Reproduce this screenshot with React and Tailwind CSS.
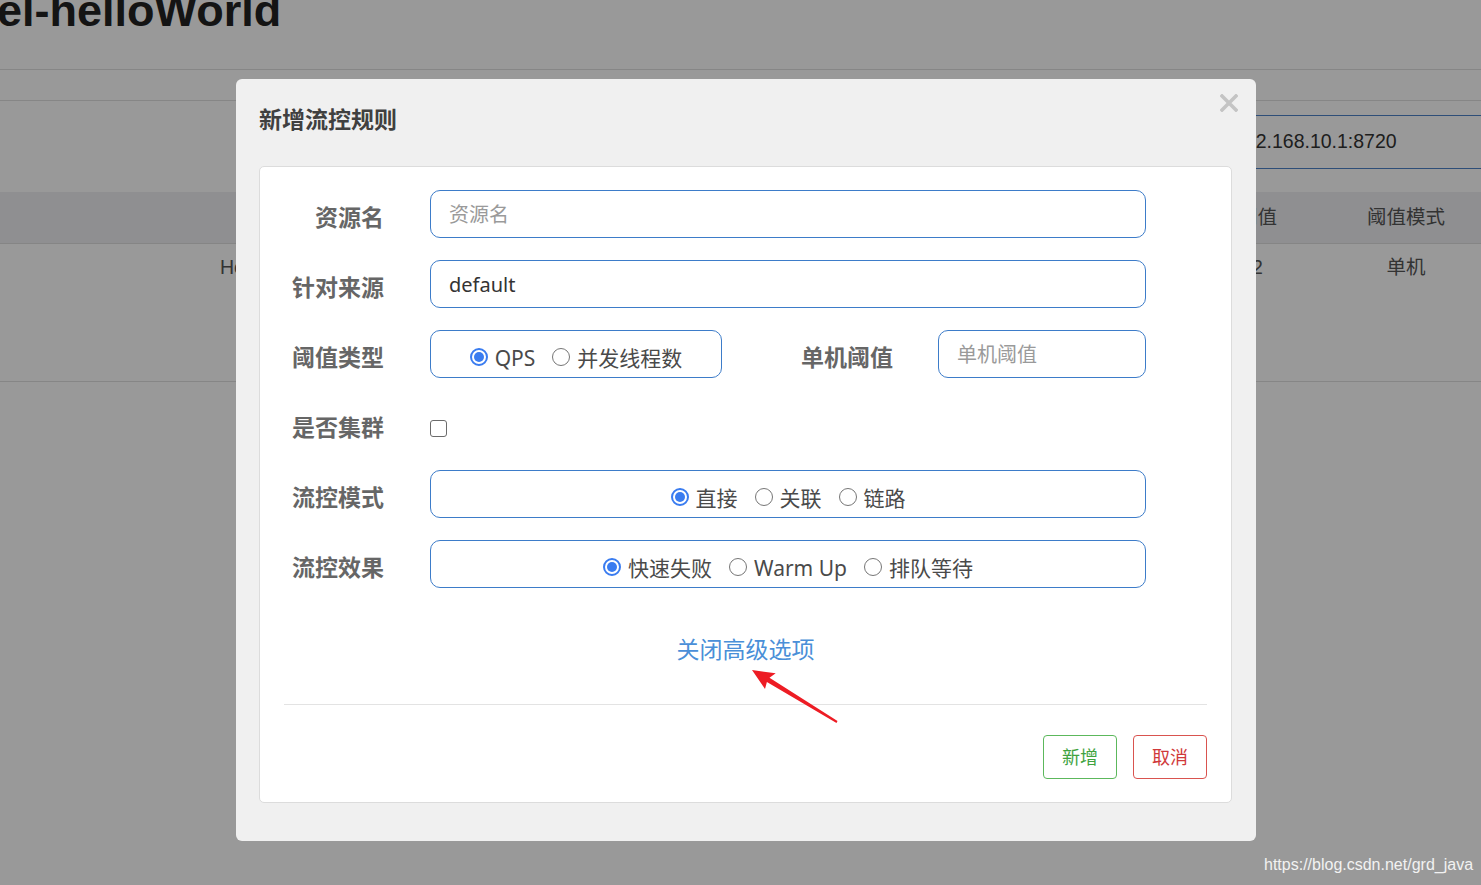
import React from "react";

const cn = "font-['Noto_Sans','Noto_Sans_CJK_SC',sans-serif]";

const Radio = ({ checked, label }) => (
  <label className="flex items-center gap-[7px]">
    {checked ? (
      <span className="w-[18px] h-[18px] rounded-full border-2 border-[#3a7cf0] bg-white flex items-center justify-center">
        <span className="w-[10px] h-[10px] rounded-full bg-[#3a7cf0]" />
      </span>
    ) : (
      <span className="w-[18px] h-[18px] rounded-full border-[1.5px] border-[#767676] bg-white" />
    )}
    <span className="text-[21px] leading-[28px] pt-[3px] text-[#4a4a4a]">{label}</span>
  </label>
);

const Label = ({ children, className = "w-[100px]" }) => (
  <div
    className={`${className} shrink-0 text-right pt-[6px] text-[23px] leading-[30px] font-bold text-[#666]`}
  >
    {children}
  </div>
);

const TextBox = ({ placeholder, value, className = "flex-1" }) => (
  <input
    readOnly
    placeholder={placeholder}
    value={value}
    className={`${className} h-[48px] min-w-0 rounded-[10px] border border-[#3d7cc9] bg-white px-[18px] text-[20px] text-[#333] outline-none placeholder:text-[#9a9a9a]`}
  />
);

const RadioBox = ({ items, className = "flex-1" }) => (
  <div
    className={`${className} h-[48px] rounded-[10px] border border-[#3d7cc9] bg-white flex items-center justify-center gap-[17px] pt-[5px]`}
  >
    {items.map((it) => (
      <Radio key={it.label} checked={it.checked} label={it.label} />
    ))}
  </div>
);

const Modal = () => (
  <div
    className={`absolute left-[236px] top-[79px] w-[1020px] rounded-[6px] bg-[#f0f0f0] pb-[38px] ${cn}`}
  >
    {/* header */}
    <div className="h-[87px] pl-[23px] pt-[26px]">
      <h3 className="text-[23px] leading-[28px] font-bold text-[#404040]">
        新增流控规则
      </h3>
    </div>
    <svg
      className="absolute right-[18px] top-[15px] w-[18px] h-[18px]"
      viewBox="0 0 18 18"
    >
      <path
        d="M2 2 L16 16 M16 2 L2 16"
        stroke="#c4c4c4"
        strokeWidth="3.6"
        strokeLinecap="square"
      />
    </svg>

    {/* body */}
    <div className="ml-[23px] w-[973px] rounded-[5px] border border-[#dcdcdc] bg-white px-[24px] pt-[23px] pb-[23px]">
      <div className="w-[862px] flex flex-col gap-[22px]">
        <div className="flex items-center gap-[46px]">
          <Label>资源名</Label>
          <TextBox placeholder="资源名" value="" />
        </div>
        <div className="flex items-center gap-[46px]">
          <Label>针对来源</Label>
          <TextBox value="default" />
        </div>
        <div className="flex items-center gap-[46px]">
          <Label>阈值类型</Label>
          <RadioBox
            className="w-[292px]"
            items={[
              { label: "QPS", checked: true },
              { label: "并发线程数", checked: false },
            ]}
          />
          <div className="flex flex-1 items-center gap-[45px]">
            <Label className="flex-1">单机阈值</Label>
            <TextBox className="w-[208px]" placeholder="单机阈值" value="" />
          </div>
        </div>
        <div className="flex items-center gap-[46px] h-[48px]">
          <Label>是否集群</Label>
          <div className="pt-[8px]">
            <span className="block w-[17px] h-[17px] rounded-[3px] border-[1.5px] border-[#6b6b6b] bg-white" />
          </div>
        </div>
        <div className="flex items-center gap-[46px]">
          <Label>流控模式</Label>
          <RadioBox
            items={[
              { label: "直接", checked: true },
              { label: "关联", checked: false },
              { label: "链路", checked: false },
            ]}
          />
        </div>
        <div className="flex items-center gap-[46px]">
          <Label>流控效果</Label>
          <RadioBox
            items={[
              { label: "快速失败", checked: true },
              { label: "Warm Up", checked: false },
              { label: "排队等待", checked: false },
            ]}
          />
        </div>
      </div>

      <div className="mt-[46px] text-center text-[23px] leading-[30px] text-[#4a8fd8]">
        关闭高级选项
      </div>

      <div className="mt-[40px] border-t border-[#e3e3e3] pt-[30px] flex justify-end gap-[16px]">
        <button className="w-[74px] h-[44px] rounded-[4px] border border-[#5cb85c] bg-white text-[18px] text-[#3fa33f]">
          新增
        </button>
        <button className="w-[74px] h-[44px] rounded-[4px] border border-[#d9534f] bg-white text-[18px] text-[#d0393a]">
          取消
        </button>
      </div>
    </div>
  </div>
);

export default function App() {
  return (
    <div className="relative w-[1481px] h-[885px] overflow-hidden bg-white font-['Liberation_Sans','Noto_Sans_CJK_SC',sans-serif]">
      {/* page behind the dialog */}
      <div className="h-[70px] flex border-b border-[#e0e0e0]">
        <h1 className="-mt-[12px] -ml-[3px] text-[45px] leading-[45px] font-bold text-[#222]">
          el-helloWorld
        </h1>
      </div>
      <div className="h-[31px] border-b border-[#e0e0e0]" />
      <div className="h-[91px] flex justify-end pt-[14px]">
        <div className="w-[280px] -mr-[20px] h-[54px] border border-[#4d82c8] flex items-center pl-[12px] text-[19.5px] text-[#333]">
          192.168.10.1:8720
        </div>
      </div>
      <div className="h-[52px] flex items-center bg-[#eeeff2] border-b border-[#dedede] text-[19.5px] text-[#555]">
        <div className="flex-1" />
        <div className="w-[147px] text-center">阈值</div>
        <div className="w-[150px] text-center">阈值模式</div>
      </div>
      <div className="h-[138px] flex border-b border-[#e0e0e0] pt-[12px] text-[19.5px] leading-[22px] text-[#555]">
        <div className="w-[220px]" />
        <div className="flex-1">HelloWorld</div>
        <div className="w-[147px] text-center">2</div>
        <div className="w-[150px] text-center">单机</div>
      </div>

      {/* backdrop */}
      <div className="absolute inset-0 bg-black/40" />

      <Modal />

      {/* red annotation arrow */}
      <svg
        className="absolute inset-0 w-full h-full pointer-events-none"
        viewBox="0 0 1481 885"
      >
        <polygon
          points="752,670 775.7,673.3 769.5,677.8 837.5,721.1 836.5,722.9 766.9,682 765,689"
          fill="#ed1c24"
        />
      </svg>

      <div className="absolute left-[1264px] top-[856px] text-[16px] leading-[18px] text-[#f2f2f2]">
        https://blog.csdn.net/grd_java
      </div>
    </div>
  );
}
